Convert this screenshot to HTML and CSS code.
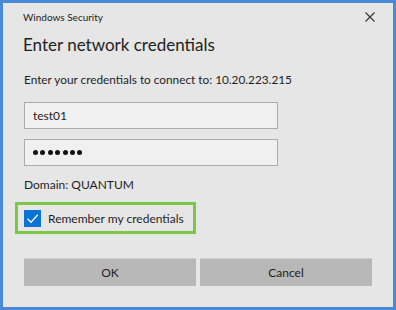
FILE: index.html
```html
<!DOCTYPE html>
<html>
<head>
<title>Windows Security</title>
<link rel="stylesheet" href="styles.css">
</head>
<body>
  <div class="dialog">
    <div class="titlebar">
      <span class="app-name">Windows Security</span>
      <svg class="close" width="10" height="10" viewBox="0 0 10 10">
        <path d="M0.5 0.5 L9.5 9.5 M9.5 0.5 L0.5 9.5" stroke="#333" stroke-width="1.1" fill="none"/>
      </svg>
    </div>
    <h1 class="heading">Enter network credentials</h1>
    <p class="hint">Enter your credentials to connect to: 10.20.223.215</p>
    <div class="field">test01</div>
    <div class="field dots" aria-label="password">
      <i></i><i></i><i></i><i></i><i></i><i></i><i></i>
    </div>
    <p class="domain">Domain: QUANTUM</p>
    <div class="remember">
      <span class="check">
        <svg width="17" height="17" viewBox="0 0 17 17">
          <path d="M3.5 8.8 L7 12.2 L13.8 4.8" stroke="#fff" stroke-width="1.3" fill="none"/>
        </svg>
      </span>
      <span>Remember my credentials</span>
    </div>
    <div class="buttons">
      <div class="btn">OK</div>
      <div class="btn">Cancel</div>
    </div>
  </div>
</body>
</html>
```

FILE: styles.css
```css
body {
  margin: 0;
  font-family: Lato, "Noto Sans", sans-serif;
  color: #1e1e1e;
}

.dialog {
  width: 396px;
  height: 310px;
  box-sizing: border-box;
  border: 3px solid #4a89d6;
  background-color: #e6e6e6;
  padding: 0 21px;
}

.titlebar {
  display: flex;
  justify-content: space-between;
  align-items: center;
  height: 27px;
  margin-left: -1px;
}

.app-name {
  font-size: 10px;
  color: #222;
}

.close {
  margin-right: -3px;
  margin-top: 1px;
}

.heading {
  margin: 0 0 0 -1px;
  font-size: 17px;
  font-weight: normal;
  line-height: 30px;
}

.hint {
  margin: 11px 0 0 0;
  font-size: 11.8px;
  line-height: 18px;
}

.field {
  width: 254px;
  height: 27px;
  margin-top: 13px;
  box-sizing: border-box;
  border: 1px solid #acacac;
  background-color: #f0f0f0;
  font-size: 12px;
  line-height: 25px;
  padding-left: 8px;
}

.field + .field {
  margin-top: 10px;
}

.dots {
  display: flex;
  align-items: center;
  gap: 2.4px;
}

.dots i {
  width: 5px;
  height: 5px;
  border-radius: 50%;
  background-color: #111;
}

.domain {
  margin: 10px 0 0 0;
  font-size: 12px;
  line-height: 18px;
}

.remember {
  display: inline-flex;
  align-items: center;
  gap: 7px;
  box-sizing: border-box;
  height: 32px;
  margin: 8px 0 0 -9px;
  border: 3px solid #7cc846;
  padding: 0 9px 0 6px;
  font-size: 12px;
}

.check {
  width: 17px;
  height: 17px;
  background-color: #0a74d6;
  display: flex;
}

.buttons {
  display: flex;
  gap: 4px;
  margin-top: 24px;
}

.btn {
  width: 172px;
  height: 28px;
  box-sizing: border-box;
  background-color: #b8b8b8;
  border-top: 1px solid #cdcdcd;
  text-align: center;
  font-size: 12px;
  line-height: 27px;
}
```
